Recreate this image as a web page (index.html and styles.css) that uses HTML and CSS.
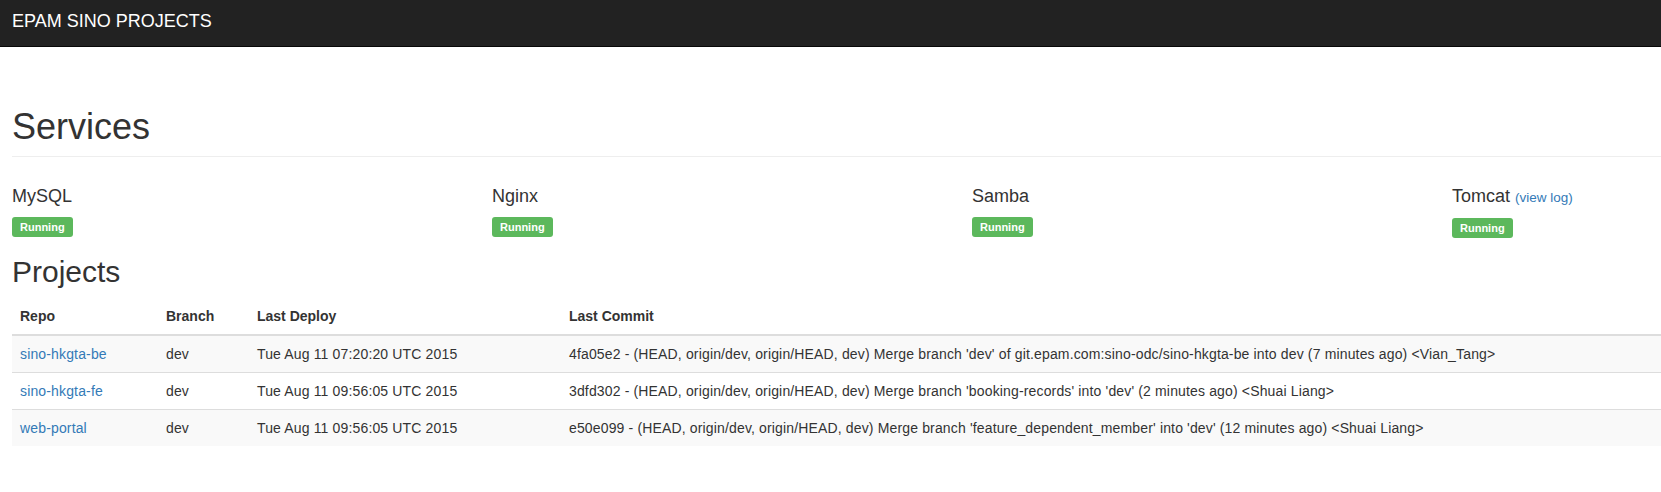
FILE: index.html
```html
<!DOCTYPE html>
<html>
<head>
<meta charset="utf-8">
<title>EPAM SINO PROJECTS</title>
<link rel="stylesheet" href="styles.css">
</head>
<body>
<nav class="navbar">
  <a class="brand" href="#">EPAM SINO PROJECTS</a>
</nav>
<main class="page">
  <div class="page-header">
    <h1>Services</h1>
  </div>
  <div class="services">
    <div class="service">
      <h4>MySQL</h4>
      <div class="status"><span class="label">Running</span></div>
    </div>
    <div class="service">
      <h4>Nginx</h4>
      <div class="status"><span class="label">Running</span></div>
    </div>
    <div class="service">
      <h4>Samba</h4>
      <div class="status"><span class="label">Running</span></div>
    </div>
    <div class="service">
      <h4>Tomcat <small><a href="#">(view log)</a></small></h4>
      <div class="status"><span class="label">Running</span></div>
    </div>
  </div>
  <h2>Projects</h2>
  <table class="table">
    <thead>
      <tr>
        <th class="c-repo">Repo</th>
        <th class="c-branch">Branch</th>
        <th class="c-deploy">Last Deploy</th>
        <th>Last Commit</th>
      </tr>
    </thead>
    <tbody>
      <tr>
        <td><a href="#">sino-hkgta-be</a></td>
        <td>dev</td>
        <td>Tue Aug 11 07:20:20 UTC 2015</td>
        <td>4fa05e2 - (HEAD, origin/dev, origin/HEAD, dev) Merge branch 'dev' of git.epam.com:sino-odc/sino-hkgta-be into dev (7 minutes ago) &lt;Vian_Tang&gt;</td>
      </tr>
      <tr>
        <td><a href="#">sino-hkgta-fe</a></td>
        <td>dev</td>
        <td>Tue Aug 11 09:56:05 UTC 2015</td>
        <td>3dfd302 - (HEAD, origin/dev, origin/HEAD, dev) Merge branch 'booking-records' into 'dev' (2 minutes ago) &lt;Shuai Liang&gt;</td>
      </tr>
      <tr>
        <td><a href="#">web-portal</a></td>
        <td>dev</td>
        <td>Tue Aug 11 09:56:05 UTC 2015</td>
        <td>e50e099 - (HEAD, origin/dev, origin/HEAD, dev) Merge branch 'feature_dependent_member' into 'dev' (12 minutes ago) &lt;Shuai Liang&gt;</td>
      </tr>
    </tbody>
  </table>
</main>
</body>
</html>
```
FILE: styles.css
```css
html, body {
  margin: 0;
  padding: 0;
  overflow: hidden;
}
body {
  font-family: "Liberation Sans", Arial, sans-serif;
  font-size: 14px;
  line-height: 20px;
  color: #333;
  background: #fff;
}
a {
  color: #337ab7;
  text-decoration: none;
}
.navbar {
  height: 46px;
  background: #222;
  border-bottom: 1px solid #080808;
  box-sizing: content-box;
}
.brand {
  display: block;
  padding: 11px 12px 0;
  font-size: 18px;
  line-height: 20px;
  color: #fff;
}
.page {
  width: 1920px;
  padding: 0 0 0 12px;
}
.page-header {
  margin: 60px 0 20px;
  padding-bottom: 9px;
  border-bottom: 1px solid #eee;
}
h1 {
  margin: 0;
  font-size: 36px;
  line-height: 39.6px;
  font-weight: 500;
}
.services {
  display: grid;
  grid-template-columns: repeat(4, 480px);
}
.service h4 {
  margin: 10px 0 10px;
  font-size: 18px;
  line-height: 19.8px;
  font-weight: 500;
}
.service small {
  font-size: 75%;
}
.status {
  height: 20px;
}
.label {
  display: inline-block;
  height: 20px;
  line-height: 20px;
  padding: 0 8px;
  font-size: 11px;
  font-weight: bold;
  color: #fff;
  background: #5cb85c;
  border-radius: 3px;
}
h2 {
  margin: 18px 0 10px;
  font-size: 30px;
  line-height: 33px;
  font-weight: 500;
}
.table {
  width: 100%;
  border-collapse: collapse;
  border-spacing: 0;
}
.table th, .table td {
  padding: 8px;
  text-align: left;
  vertical-align: top;
  line-height: 20px;
  white-space: nowrap;
}
.table th {
  font-weight: bold;
  border-bottom: 2px solid #ddd;
}
.table td {
  border-top: 1px solid #ddd;
  letter-spacing: 0.15px;
}
.table tbody tr:nth-child(odd) {
  background: #f9f9f9;
}
.c-repo { width: 130px; }
.c-branch { width: 75px; }
.c-deploy { width: 296px; }
```
